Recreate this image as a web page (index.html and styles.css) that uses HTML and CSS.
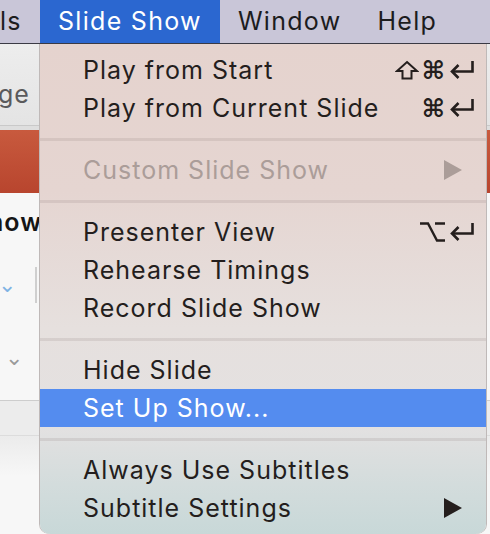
FILE: index.html
```html
<!DOCTYPE html>
<html lang="en">
<head>
  <meta charset="UTF-8" />
  <title>Slide Show menu</title>
  <link rel="stylesheet" href="styles.css">
</head>
<body>

  <div class="menubar">
    <span class="bar-item first">ls</span>
    <span class="bar-item active">Slide Show</span>
    <span class="bar-item">Window</span>
    <span class="bar-item">Help</span>
  </div>

  <div class="stage">
    <!-- app window behind the menu -->
    <div class="app">
      <div class="toolbar"><span class="tb-text">ge</span></div>
      <div class="ribbon"></div>
      <div class="pane">
        <div class="pane-title">how</div>
        <div class="pane-row">
          <span class="chev blue">&#8964;</span>
          <span class="vdiv"></span>
        </div>
        <div class="pane-row second">
          <span class="chev gray">&#8964;</span>
        </div>
      </div>
      <div class="pane-band"></div>
      <div class="pane-rest"></div>
    </div>

    <div class="menu">
      <div class="item">
        <span>Play from Start</span>
        <span class="keys">
          <svg width="24" height="20" viewBox="0 0 24 20"><path d="M12 2 L22 11 H16.5 V18.5 H7.5 V11 H2 Z" fill="none" stroke="currentColor" stroke-width="2" stroke-linejoin="miter"/></svg>
          <span class="cmd">&#8984;</span>
          <svg width="26" height="20" viewBox="0 0 26 20"><path d="M23.5 1 V11.5 H3" fill="none" stroke="currentColor" stroke-width="2.6"/><path d="M9.5 5 L3 11.5 L9.5 18" fill="none" stroke="currentColor" stroke-width="2.6"/></svg>
        </span>
      </div>
      <div class="item">
        <span>Play from Current Slide</span>
        <span class="keys">
          <span class="cmd">&#8984;</span>
          <svg width="26" height="20" viewBox="0 0 26 20"><path d="M23.5 1 V11.5 H3" fill="none" stroke="currentColor" stroke-width="2.6"/><path d="M9.5 5 L3 11.5 L9.5 18" fill="none" stroke="currentColor" stroke-width="2.6"/></svg>
        </span>
      </div>
      <div class="sep"></div>
      <div class="item disabled">
        <span>Custom Slide Show</span>
        <svg class="arrow" width="18" height="20" viewBox="0 0 18 20"><path d="M0 0 L18 10 L0 20 Z" fill="currentColor"/></svg>
      </div>
      <div class="sep"></div>
      <div class="item">
        <span>Presenter View</span>
        <span class="keys">
          <svg width="26" height="22" viewBox="0 0 26 22"><path d="M0 2.5 H8 L17 19.5 H25 M15 2.5 H25" fill="none" stroke="currentColor" stroke-width="2.4"/></svg>
          <svg width="26" height="20" viewBox="0 0 26 20"><path d="M23.5 1 V11.5 H3" fill="none" stroke="currentColor" stroke-width="2.6"/><path d="M9.5 5 L3 11.5 L9.5 18" fill="none" stroke="currentColor" stroke-width="2.6"/></svg>
        </span>
      </div>
      <div class="item"><span>Rehearse Timings</span></div>
      <div class="item"><span>Record Slide Show</span></div>
      <div class="sep"></div>
      <div class="item"><span>Hide Slide</span></div>
      <div class="item selected"><span>Set Up Show...</span></div>
      <div class="sep"></div>
      <div class="item"><span>Always Use Subtitles</span></div>
      <div class="item">
        <span>Subtitle Settings</span>
        <svg class="arrow" width="18" height="20" viewBox="0 0 18 20"><path d="M0 0 L18 10 L0 20 Z" fill="currentColor"/></svg>
      </div>
    </div>
  </div>

</body>
</html>
```

FILE: styles.css
```css
html, body {
  margin: 0;
  padding: 0;
}
body {
  width: 490px;
  height: 534px;
  overflow: hidden;
  font-family: 'Inter', 'Liberation Sans', sans-serif;
  background: #f4f4f4;
}
.menubar {
  height: 44px;
  display: flex;
  align-items: stretch;
  background: #c9c6d8;
  border-bottom: 1px solid #3a3a44;
  box-sizing: border-box;
  font-size: 25px;
  letter-spacing: 1.3px;
  color: #1c1c1e;
}
.bar-item {
  display: flex;
  align-items: center;
  padding: 0 18px;
  padding-bottom: 2px;
}
.bar-item.first {
  padding-left: 0;
  width: 22px;
}
.bar-item.active {
  background: #2b67d0;
  color: #fff;
}
.stage {
  position: relative;
  height: 490px;
}
.app {
  display: flex;
  flex-direction: column;
  height: 100%;
}
.toolbar {
  height: 82px;
  background: linear-gradient(#ededed, #e4e4e4);
  border-bottom: 1px solid #c9c9c9;
  display: flex;
  align-items: center;
  box-sizing: border-box;
}
.tb-text {
  font-size: 25px;
  letter-spacing: 1px;
  color: #5a5a5c;
  margin-left: -2px;
  padding-top: 18px;
}
.ribbon {
  height: 67px;
  border-top: 4px solid #dedede;
  background: linear-gradient(#c85a3e, #b8452e);
  box-sizing: border-box;
}
.pane {
  background: #f7f7f7;
  height: 207px;
  display: flex;
  flex-direction: column;
}
.pane-title {
  font-size: 25px;
  font-weight: 600;
  letter-spacing: 1px;
  color: #151515;
  margin-left: -12px;
  margin-top: 14px;
}
.pane-row {
  display: flex;
  align-items: center;
  height: 40px;
  margin-top: 28px;
}
.pane-row.second {
  margin-top: 33px;
}
.chev {
  font-family: 'DejaVu Sans', sans-serif;
  font-size: 22px;
  line-height: 1;
}
.chev.blue {
  color: #7eb3e4;
  margin-left: -2px;
}
.chev.gray {
  color: #9a9a9a;
  margin-left: 5px;
}
.vdiv {
  width: 2px;
  height: 36px;
  background: #cfcfcf;
  margin-left: 19px;
}
.pane-band {
  height: 34px;
  border-top: 1px solid #cdcdcd;
  border-bottom: 1px solid #dcdcdc;
  background: #ececec;
}
.pane-rest {
  flex: 1;
  background: linear-gradient(#ebebeb, #f7f7f7 40px);
}
.menu {
  position: absolute;
  left: 40px;
  top: 0;
  width: 446px;
  height: 490px;
  box-sizing: border-box;
  padding-top: 7px;
  border-radius: 0 0 10px 10px;
  background: linear-gradient(#e5d3ce 0%, #e5d5d1 30%, #e6e0de 58%, #e3e1e1 78%, #d3dcdc 90%, #c8d8d8 100%);
  box-shadow: -1px 0 0 #bfb9b8, 1px 0 0 #bfb9b8;
  color: #241e1d;
  font-size: 25px;
  letter-spacing: 1px;
}
.item {
  height: 38px;
  display: flex;
  align-items: center;
  justify-content: space-between;
  padding: 0 11px 0 43px;
}
.item.disabled {
  color: #ab9d99;
}
.item.selected {
  background: #548cef;
  color: #fff;
}
.keys {
  display: flex;
  align-items: center;
  gap: 3px;
}
.cmd {
  font-family: 'DejaVu Sans', sans-serif;
  font-size: 25px;
  font-weight: bold;
  line-height: 1;
}
.arrow {
  margin-right: 13px;
}
.sep {
  height: 3px;
  margin: 11px 0 10px;
  background: rgba(120, 100, 100, 0.14);
}
```
